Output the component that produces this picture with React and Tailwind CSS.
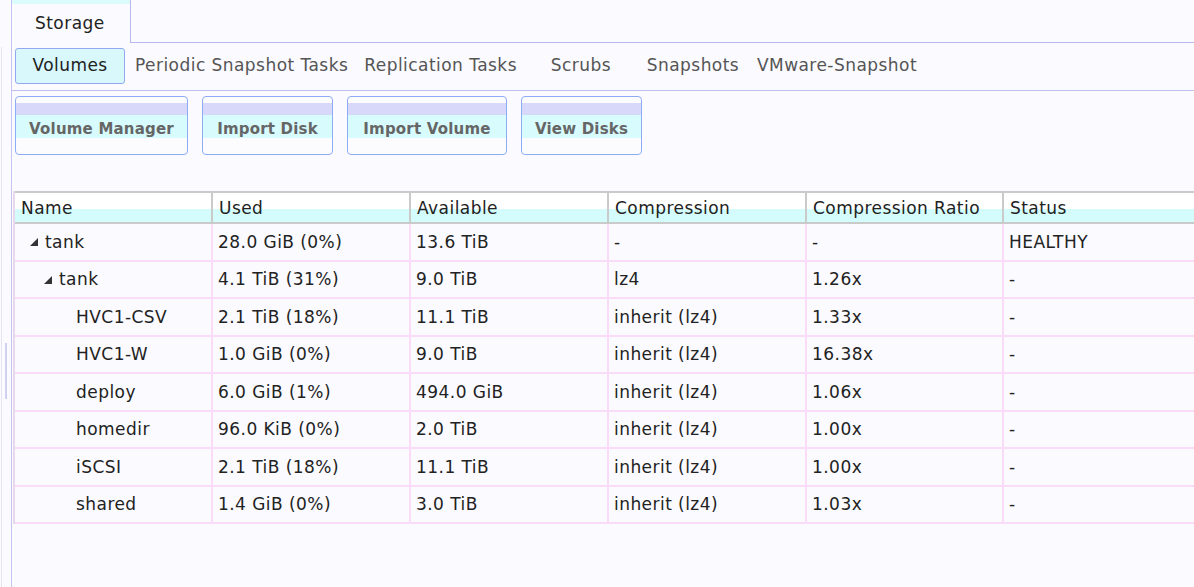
import React from "react";

const subTabs = [
  "Periodic Snapshot Tasks",
  "Replication Tasks",
  "Scrubs",
  "Snapshots",
  "VMware-Snapshot",
];

const actions = [
  { label: "Volume Manager", w: "w-[173px]" },
  { label: "Import Disk", w: "w-[131px]" },
  { label: "Import Volume", w: "w-[160px]" },
  { label: "View Disks", w: "w-[121px]" },
];

const columns = ["Name", "Used", "Available", "Compression", "Compression Ratio", "Status"];

const rows = [
  { name: "tank", level: 0, used: "28.0 GiB (0%)", avail: "13.6 TiB", comp: "-", ratio: "-", status: "HEALTHY" },
  { name: "tank", level: 1, used: "4.1 TiB (31%)", avail: "9.0 TiB", comp: "lz4", ratio: "1.26x", status: "-" },
  { name: "HVC1-CSV", level: 2, used: "2.1 TiB (18%)", avail: "11.1 TiB", comp: "inherit (lz4)", ratio: "1.33x", status: "-" },
  { name: "HVC1-W", level: 2, used: "1.0 GiB (0%)", avail: "9.0 TiB", comp: "inherit (lz4)", ratio: "16.38x", status: "-" },
  { name: "deploy", level: 2, used: "6.0 GiB (1%)", avail: "494.0 GiB", comp: "inherit (lz4)", ratio: "1.06x", status: "-" },
  { name: "homedir", level: 2, used: "96.0 KiB (0%)", avail: "2.0 TiB", comp: "inherit (lz4)", ratio: "1.00x", status: "-" },
  { name: "iSCSI", level: 2, used: "2.1 TiB (18%)", avail: "11.1 TiB", comp: "inherit (lz4)", ratio: "1.00x", status: "-" },
  { name: "shared", level: 2, used: "1.4 GiB (0%)", avail: "3.0 TiB", comp: "inherit (lz4)", ratio: "1.03x", status: "-" },
];

const gridCols = "grid grid-cols-[198px_198px_198px_198px_197px_1fr]";

const Expander = () => (
  <svg viewBox="0 0 8 8" className="w-[8px] h-[8px] shrink-0">
    <polygon points="8,0 8,8 0,8" fill="#333" />
  </svg>
);

const NameCell = ({ row }) => {
  const pad = row.level === 0 ? "pl-[15px]" : row.level === 1 ? "pl-[29px]" : "pl-[61px]";
  return (
    <div className={`flex items-center gap-[7px] h-full pt-[1px] ${pad}`}>
      {row.level < 2 && <Expander />}
      <span>{row.name}</span>
    </div>
  );
};

export default function App() {
  return (
    <div
      className="w-[1194px] h-[587px] overflow-hidden flex bg-[#fafaff] text-[#222] text-[17px] tracking-[0.45px]"
      style={{ fontFamily: '"DejaVu Sans", Verdana, sans-serif' }}
    >
      {/* left splitter strip */}
      <div className="w-[11px] shrink-0 flex flex-col">
        <div className="h-[47px]" />
        <div className="flex-1 flex">
          <div className="w-[2px] border-r border-[#e4e4f4]" />
          <div className="flex flex-col">
            <div className="h-[296px]" />
            <div className="ml-[3px] w-[2px] h-[56px] bg-[#d0d0f0]" />
          </div>
        </div>
      </div>

      <div className="flex-1 flex flex-col border-l border-[#c4c4ee] min-w-0">
        {/* Storage tab */}
        <div className="flex h-[43px] shrink-0">
          <div className="w-[119px] flex flex-col border-r border-[#b8b8ee]">
            <div className="h-[4px] bg-[#dcfcfc]" />
            <div className="flex-1 flex items-center pl-[23px] pt-[1px] text-[#222]">Storage</div>
          </div>
          <div className="flex-1 border-b border-[#b8b8ee]" />
        </div>

        {/* sub tabs */}
        <div className="flex items-center h-[48px] border-b border-[#c0c0ee] shrink-0 pl-[3px] pb-[2px]">
          <div className="w-[110px] h-[36px] flex items-center justify-center rounded-[3px] border border-[#92a8f0] bg-[#d8f8fc] text-[#222] mr-[2px]">
            Volumes
          </div>
          {subTabs.map((t) => (
            <div key={t} className="min-w-[112px] px-[8px] h-[36px] flex items-center justify-center text-[#555]">
              {t}
            </div>
          ))}
        </div>

        {/* action buttons */}
        <div className="flex gap-[14px] pl-[3px] pt-[5px] shrink-0">
          {actions.map((a) => (
            <div
              key={a.label}
              className={`${a.w} h-[59px] flex flex-col rounded-[4px] border-[1.5px] border-[#8eacf6] overflow-hidden bg-[#fcfcff]`}
            >
              <div className="h-[6px]" />
              <div className="h-[12px] bg-[#d8d8fa]" />
              <div className="h-[23px] bg-[#d8fcfe] flex items-end justify-center font-bold text-[15px] tracking-[0.2px] text-[#666] leading-[20px]">
                <span className="translate-y-[1px]">{a.label}</span>
              </div>
              <div className="flex-1" />
            </div>
          ))}
        </div>

        {/* table */}
        <div className="mt-[36px] ml-[1px] border-l-2 border-[#e8d8ec]">
          <div className={`${gridCols} h-[33px] border-t-2 border-b-2 border-[#cacaca] bg-[linear-gradient(#ffffff_0,#ffffff_55%,#d4fcfc_55%,#d4fcfc_100%)]`}>
            {columns.map((c, i) => (
              <div
                key={c}
                className={`flex items-center pl-[6px] pt-[3px] ${i < columns.length - 1 ? "border-r-2 border-[#cacaca]" : ""}`}
              >
                {c}
              </div>
            ))}
          </div>
          {rows.map((r, idx) => (
            <div key={idx} className={`${gridCols} h-[37.5px] border-b-2 border-[#fadcfa]`}>
              <div className="border-r-2 border-[#fadcfa]">
                <NameCell row={r} />
              </div>
              {[r.used, r.avail, r.comp, r.ratio, r.status].map((v, i) => (
                <div
                  key={i}
                  className={`flex items-center pl-[5px] pt-[1px] ${i < 4 ? "border-r-2 border-[#fadcfa]" : ""}`}
                >
                  {v}
                </div>
              ))}
            </div>
          ))}
        </div>
      </div>
    </div>
  );
}
